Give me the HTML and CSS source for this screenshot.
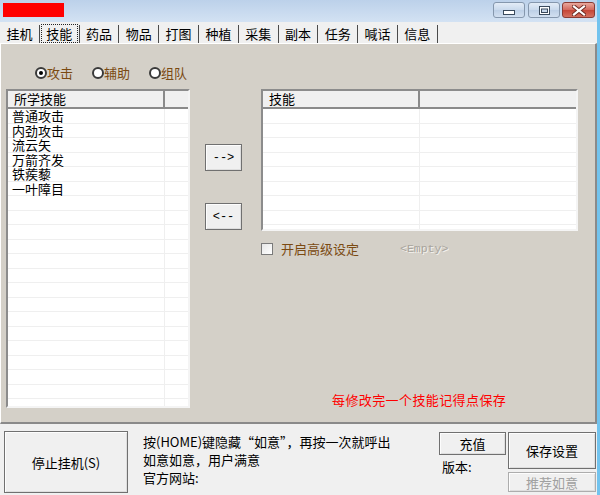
FILE: index.html
```html
<!DOCTYPE html>
<html lang="zh">
<head>
<meta charset="utf-8">
<link rel="stylesheet" href="styles.css">
</head>
<body>
<div class="window">
  <div class="titlebar">
    <div class="title-red"></div>
    <div class="caption">
      <div class="cap cap-min"><svg width="12" height="6" viewBox="0 0 12 6"><rect x="0.5" y="0.5" width="11" height="4" fill="#fff" stroke="#3a4a5c"/></svg></div>
      <div class="cap cap-max"><svg width="11" height="9" viewBox="0 0 11 9"><rect x="0.5" y="0.5" width="10" height="8" fill="#fff" stroke="#3a4a5c"/><rect x="2.5" y="3" width="6" height="3.5" fill="#c7d7ea" stroke="#3a4a5c" stroke-width="1"/></svg></div>
      <div class="cap cap-close"><svg width="14" height="11" viewBox="0 0 14 11"><path d="M2 1.5 L12 9.5 M12 1.5 L2 9.5" stroke="#6b2a22" stroke-width="4" stroke-linecap="square"/><path d="M2 1.5 L12 9.5 M12 1.5 L2 9.5" stroke="#fff" stroke-width="2.2" stroke-linecap="square"/></svg></div>
    </div>
  </div>
  <div class="client">
    <div class="tabs">
      <div class="tab">挂机</div>
      <div class="tab active"><span class="focus">技能</span></div>
      <div class="tab">药品</div>
      <div class="tab">物品</div>
      <div class="tab">打图</div>
      <div class="tab">种植</div>
      <div class="tab">采集</div>
      <div class="tab">副本</div>
      <div class="tab">任务</div>
      <div class="tab">喊话</div>
      <div class="tab">信息</div>
    </div>
    <div class="panel">
      <div class="radios">
        <div class="radio"><span class="dot on"></span><span>攻击</span></div>
        <div class="radio"><span class="dot"></span><span>辅助</span></div>
        <div class="radio"><span class="dot"></span><span>组队</span></div>
      </div>
      <div class="main">
        <div class="listview left">
          <div class="lv-head"><div class="c1">所学技能</div><div class="c2"></div></div>
          <div class="lv-row"><div class="c1">普通攻击</div><div class="c2"></div></div>
          <div class="lv-row"><div class="c1">内劲攻击</div><div class="c2"></div></div>
          <div class="lv-row"><div class="c1">流云矢</div><div class="c2"></div></div>
          <div class="lv-row"><div class="c1">万箭齐发</div><div class="c2"></div></div>
          <div class="lv-row"><div class="c1">铁蒺藜</div><div class="c2"></div></div>
          <div class="lv-row"><div class="c1">一叶障目</div><div class="c2"></div></div>
          <div class="lv-row"><div class="c1"></div><div class="c2"></div></div>
          <div class="lv-row"><div class="c1"></div><div class="c2"></div></div>
          <div class="lv-row"><div class="c1"></div><div class="c2"></div></div>
          <div class="lv-row"><div class="c1"></div><div class="c2"></div></div>
          <div class="lv-row"><div class="c1"></div><div class="c2"></div></div>
          <div class="lv-row"><div class="c1"></div><div class="c2"></div></div>
          <div class="lv-row"><div class="c1"></div><div class="c2"></div></div>
          <div class="lv-row"><div class="c1"></div><div class="c2"></div></div>
          <div class="lv-row"><div class="c1"></div><div class="c2"></div></div>
          <div class="lv-row"><div class="c1"></div><div class="c2"></div></div>
          <div class="lv-row"><div class="c1"></div><div class="c2"></div></div>
          <div class="lv-row"><div class="c1"></div><div class="c2"></div></div>
          <div class="lv-row"><div class="c1"></div><div class="c2"></div></div>
          <div class="lv-row"><div class="c1"></div><div class="c2"></div></div>
          <div class="lv-row"><div class="c1"></div><div class="c2"></div></div>
          <div class="lv-row"><div class="c1"></div><div class="c2"></div></div>
        </div>
        <div class="movebtns">
          <button class="btn btn-move">--&gt;</button>
          <button class="btn btn-move">&lt;--</button>
        </div>
        <div class="rightcol">
          <div class="listview right">
            <div class="lv-head"><div class="c1">技能</div><div class="c2"></div></div>
            <div class="lv-row"><div class="c1"></div><div class="c2"></div></div>
            <div class="lv-row"><div class="c1"></div><div class="c2"></div></div>
            <div class="lv-row"><div class="c1"></div><div class="c2"></div></div>
            <div class="lv-row"><div class="c1"></div><div class="c2"></div></div>
            <div class="lv-row"><div class="c1"></div><div class="c2"></div></div>
            <div class="lv-row"><div class="c1"></div><div class="c2"></div></div>
            <div class="lv-row"><div class="c1"></div><div class="c2"></div></div>
            <div class="lv-row"><div class="c1"></div><div class="c2"></div></div>
            <div class="lv-row"><div class="c1"></div><div class="c2"></div></div>
          </div>
          <div class="adv">
            <span class="checkbox"></span>
            <span class="adv-label">开启高级设定</span>
            <span class="empty">&lt;Empty&gt;</span>
          </div>
          <div class="note">每修改完一个技能记得点保存</div>
        </div>
      </div>
    </div>
    <div class="bottom">
      <button class="btn btn-stop">停止挂机(S)</button>
      <div class="info">
        <div>按(HOME)键隐藏“如意”，再按一次就呼出</div>
        <div>如意如意，用户满意</div>
        <div>官方网站:</div>
      </div>
      <div class="col-recharge">
        <button class="btn btn-recharge">充值</button>
        <div class="version">版本:</div>
      </div>
      <div class="col-save">
        <button class="btn btn-save">保存设置</button>
        <button class="btn btn-recommend" disabled>推荐如意</button>
      </div>
    </div>
  </div>
</div>
</body>
</html>
```
FILE: styles.css
```css
* { box-sizing: border-box; }
body {
  margin: 0;
  width: 600px;
  height: 495px;
  overflow: hidden;
  font-family: "Noto Sans CJK SC", "Liberation Sans", sans-serif;
  font-size: 13px;
  color: #000;
  background: #f0f0f0;
}
.window {
  width: 600px;
  height: 495px;
  display: flex;
  flex-direction: column;
  border-right: 3px solid #72c3ee;
}
.titlebar {
  height: 22px;
  flex: none;
  display: flex;
  align-items: flex-start;
  padding: 3px 0 0 3px;
  background: linear-gradient(#bcd1ea, #d3e2f3);
}
.title-red {
  width: 61px;
  height: 14px;
  background: #ff0000;
}
.caption {
  margin-left: auto;
  margin-top: -1px;
  margin-right: 2px;
  display: flex;
  gap: 2px;
}
.cap {
  height: 16px;
  border: 1px solid #8597ad;
  border-radius: 3px;
  display: flex;
  align-items: center;
  justify-content: center;
  background: linear-gradient(#e3ecf7, #c9d9ec 50%, #bccfe6 51%, #d2e0f0);
}
.cap-min { width: 32px; margin-right: 1px; padding-top: 5px; }
.cap-max { width: 32px; }
.cap-close {
  width: 33px;
  border-color: #8a3b33;
  background: linear-gradient(#e9a89d, #d2675b 50%, #c54536 51%, #d4705f);
}
.client {
  flex: 1;
  display: flex;
  flex-direction: column;
}
.tabs {
  height: 21px;
  flex: none;
  display: flex;
  align-items: flex-end;
  background: #f0f0f0;
}
.tab {
  width: 39.8px;
  height: 18px;
  flex: none;
  border-right: 1px solid #4a4a4a;
  display: flex;
  justify-content: center;
  line-height: 17px;
}
.tab.active { padding: 0 1px; }
.tab .focus {
  flex: 1;
  margin-top: -1px;
  border: 1px dotted #222;
  text-align: center;
  line-height: 17px;
}
.panel {
  height: 381px;
  flex: none;
  background: #d4d0c8;
  border-top: 1px solid #fff;
  border-left: 1px solid #fff;
  border-right: 2px solid #8a8a8a;
  border-bottom: 2px solid #8a8a8a;
  padding: 22px 0 0 5px;
}
.radios {
  display: flex;
  gap: 19px;
  padding-left: 29px;
  height: 14px;
  line-height: 14px;
  margin-bottom: 9px;
  color: #7b4a12;
}
.radio {
  display: flex;
  align-items: center;
}
.dot {
  width: 12px;
  height: 12px;
  border-radius: 50%;
  border: 2px solid #3a3a3a;
  background: #fff;
  display: flex;
  align-items: center;
  justify-content: center;
}
.dot.on::after {
  content: "";
  width: 4px;
  height: 4px;
  border-radius: 50%;
  background: #000;
}
.main {
  display: flex;
  height: 319px;
}
.listview {
  border: 2px solid;
  border-color: #8c8c8c #f4f4f4 #f4f4f4 #8c8c8c;
  background: #fff;
  display: flex;
  flex-direction: column;
  overflow: hidden;
}
.listview.left { width: 184px; height: 319px; }
.listview.right { width: 317px; height: 142px; flex: none; }
.lv-head {
  display: flex;
  height: 18px;
  flex: none;
  background: #f0f0f0;
  border-bottom: 2px solid #8a8a8a;
}
.lv-head .c1 {
  width: 157px;
  flex: none;
  border-right: 2px solid #8a8a8a;
  padding-left: 6px;
  line-height: 16px;
}
.lv-row {
  display: flex;
  height: 14.5px;
  flex: none;
  border-bottom: 1px solid #efefef;
}
.lv-row .c1 {
  width: 157px;
  flex: none;
  border-right: 1px solid #efefef;
  padding-left: 4px;
  line-height: 13.5px;
  white-space: nowrap;
}
.c2 { flex: 1; }
.btn {
  font-family: inherit;
  font-size: 13px;
  color: #000;
  padding: 0;
  border: 1px solid #707070;
  background: #f0f0f0;
  box-shadow: inset 1px 1px 0 #fdfdfd, inset -1px -1px 0 #dedede;
  display: flex;
  align-items: center;
  justify-content: center;
}
.movebtns {
  display: flex;
  flex-direction: column;
  margin-left: 15px;
  padding-top: 55px;
  gap: 32px;
}
.btn-move {
  width: 37px;
  height: 27px;
  font-family: "Liberation Mono", monospace;
  font-size: 12px;
}
.rightcol {
  margin-left: 19px;
  width: 317px;
  display: flex;
  flex-direction: column;
}
.adv {
  margin-top: 12px;
  display: flex;
  align-items: center;
  height: 12px;
  line-height: 12px;
}
.checkbox {
  width: 12px;
  height: 12px;
  border: 1px solid #7a7a7a;
  background: linear-gradient(135deg, #e6e6e6, #fff);
}
.adv-label {
  margin-left: 8px;
  color: #7b4a12;
}
.empty {
  margin-left: 41px;
  font-family: "Liberation Mono", monospace;
  font-size: 11.5px;
  color: #a8a49c;
  text-shadow: 1px 1px 0 #f4f2ee;
}
.note {
  margin-top: auto;
  margin-left: 71px;
  color: #ff0000;
  line-height: 16px;
  letter-spacing: 0.4px;
}
.bottom {
  flex: 1;
  display: flex;
  align-items: flex-start;
  padding: 7px 0 0 4px;
  background: #f0f0f0;
}
.btn-stop {
  width: 124px;
  height: 62px;
  flex: none;
}
.info {
  margin-left: 15px;
  width: 296px;
  flex: none;
  padding-top: 2px;
  line-height: 18px;
  white-space: nowrap;
}
.col-recharge {
  width: 67px;
  flex: none;
  display: flex;
  flex-direction: column;
}
.btn-recharge {
  width: 67px;
  height: 23px;
  margin-top: 1px;
}
.version {
  margin-top: 4px;
  padding-left: 3px;
  line-height: 16px;
}
.col-save {
  margin-left: 2px;
  width: 88px;
  display: flex;
  flex-direction: column;
}
.btn-save {
  width: 88px;
  height: 37px;
  margin-top: 1px;
}
.btn-recommend {
  width: 88px;
  height: 20px;
  margin-top: 3px;
  color: #a0a0a0;
  border-color: #adadad;
}
```
